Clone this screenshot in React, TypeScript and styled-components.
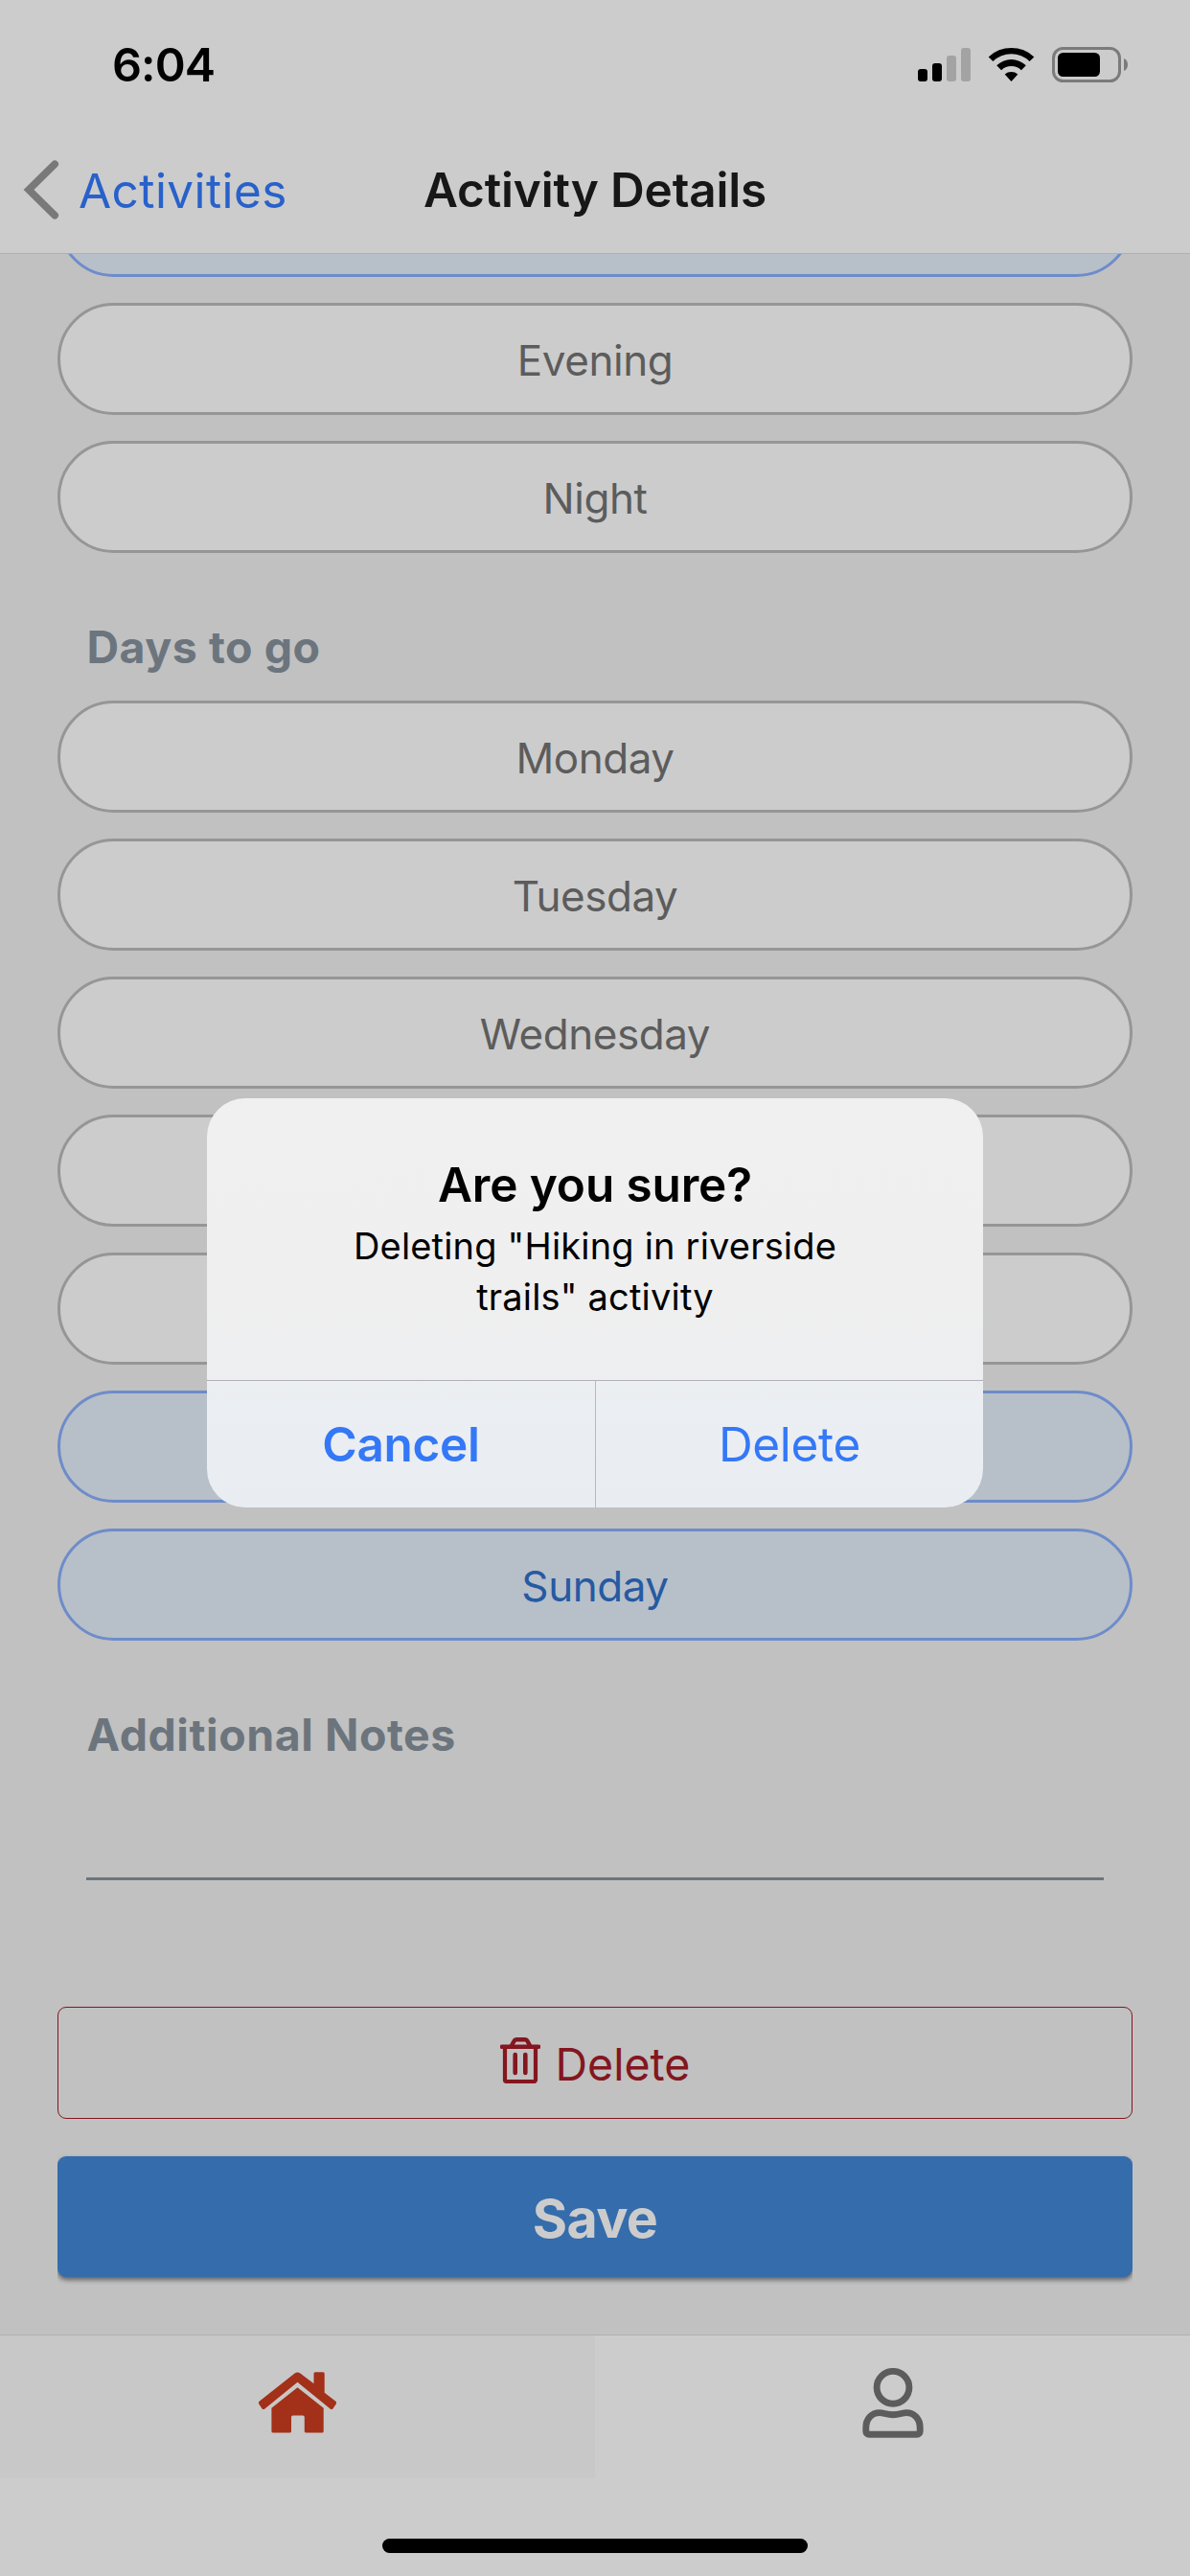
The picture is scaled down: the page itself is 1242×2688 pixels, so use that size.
import React from "react";
import styled, { createGlobalStyle } from "styled-components";

const GlobalStyle = createGlobalStyle`
  * {
    box-sizing: border-box;
  }
  body {
    margin: 0;
    background: #c1c1c1;
  }
  button {
    margin: 0;
    font: inherit;
    color: inherit;
    cursor: pointer;
  }
`;

const Screen = styled.div`
  position: relative;
  display: flex;
  flex-direction: column;
  width: 1242px;
  height: 2688px;
  overflow: hidden;
  background: #c1c1c1;
  font-family: Inter, "Liberation Sans", sans-serif;
`;

const StatusBar = styled.div`
  display: flex;
  flex: none;
  align-items: center;
  justify-content: space-between;
  height: 132px;
  padding: 3px 64px 0 117px;
  background: #cccccc;
`;

const Clock = styled.span`
  font-size: 48.5px;
  font-weight: 600;
  letter-spacing: -0.9px;
  line-height: 60px;
  color: #000;
`;

const StatusIcons = styled.svg`
  display: block;
  width: 222px;
  height: 42px;
`;

const NavBar = styled.header`
  display: grid;
  flex: none;
  grid-template-columns: 1fr auto 1fr;
  align-items: center;
  height: 133px;
  border-bottom: 1px solid #b0b0b0;
  background: #cccccc;
`;

const BackButton = styled.button`
  display: flex;
  align-items: center;
  justify-self: start;
  gap: 19px;
  padding: 0 0 0 24px;
  border: 0;
  background: none;
  color: #2861cb;
  font-size: 49.5px;
  letter-spacing: 0.42px;
  line-height: 62px;
`;

const BackLabel = styled.span`
  padding-top: 2px;
`;

const Chevron = styled.svg`
  display: block;
  width: 39px;
  height: 64px;
`;

const NavTitle = styled.h1`
  margin: 0;
  color: #171717;
  font-size: 49.5px;
  font-weight: 600;
  letter-spacing: -0.18px;
  line-height: 62px;
`;

const Content = styled.main`
  display: flex;
  flex: 1;
  flex-direction: column;
  min-height: 0;
  padding: 0 60px;
  overflow: hidden;
`;

/* The list is scrolled, so its first option is partly under the bar. */
const OptionList = styled.div<{ $scrolled?: number }>`
  display: flex;
  flex: none;
  flex-direction: column;
  gap: 27px;
  margin-top: ${(p) => (p.$scrolled ? -p.$scrolled : 0)}px;
`;

const Option = styled.button<{ $selected?: boolean }>`
  display: flex;
  flex: none;
  align-items: center;
  justify-content: center;
  height: 117px;
  padding: 3px 0 0;
  border: 3px solid ${(p) => (p.$selected ? "#6e8cca" : "#969696")};
  border-radius: 59px;
  background: ${(p) => (p.$selected ? "#b7bfc9" : "#cccccc")};
  color: ${(p) => (p.$selected ? "#265aa2" : "#5c5c5c")};
  font-size: 44px;
  letter-spacing: -0.45px;
  line-height: 56px;
`;

const SectionTitle = styled.h2`
  flex: none;
  margin: 70px 0 28px;
  padding-left: 30.5px;
  color: #6c757d;
  font-size: 46.5px;
  font-weight: 700;
  letter-spacing: 0.53px;
  line-height: 56px;
`;

const NotesField = styled.div`
  flex: none;
  height: 96px;
  margin: 0 30px 132px;
  border-bottom: 3px solid #6c757d;
`;

const Actions = styled.div`
  display: flex;
  flex: none;
  flex-direction: column;
  gap: 39px;
`;

const DeleteButton = styled.button`
  display: flex;
  align-items: center;
  justify-content: center;
  gap: 16px;
  height: 117px;
  padding: 0;
  border: 1px solid #84161f;
  border-radius: 9px;
  background: none;
  color: #84161f;
  font-size: 46.5px;
  line-height: 58px;
`;

const DeleteLabel = styled.span`
  padding-top: 3px;
`;

const TrashIcon = styled.svg`
  display: block;
  width: 42px;
  height: 48px;
  margin-bottom: 5px;
`;

const SaveButton = styled.button`
  display: flex;
  align-items: center;
  justify-content: center;
  height: 126px;
  padding: 4px 0 0;
  border: 0;
  border-radius: 9px;
  background: #356cac;
  box-shadow: 0 3px 5px rgba(0, 0, 0, 0.5);
  clip-path: inset(-4px 0 -12px);
  color: #cccccc;
  font-size: 55.5px;
  font-weight: 700;
  letter-spacing: -0.6px;
  line-height: 68px;
`;

const TabBar = styled.nav`
  display: grid;
  flex: none;
  grid-template-columns: 1fr 1fr;
  height: 150px;
  border-top: 1px solid #b0b0b0;
  background: #cccccc;
`;

const Tab = styled.button<{ $active?: boolean }>`
  display: flex;
  align-items: center;
  justify-content: center;
  padding: 0 0 9px;
  border: 0;
  background: ${(p) => (p.$active ? "#c8c8c8" : "#cccccc")};
  color: ${(p) => (p.$active ? "#a33018" : "#5c5c5c")};
`;

const HomeIcon = styled.svg`
  display: block;
  width: 81px;
  height: 64px;
`;

const PersonIcon = styled.svg`
  display: block;
  width: 64px;
  height: 73px;
`;

const HomeArea = styled.div`
  display: flex;
  flex: none;
  align-items: flex-end;
  justify-content: center;
  height: 102px;
  padding-bottom: 24px;
  background: #cccccc;
`;

const HomeIndicator = styled.div`
  width: 444px;
  height: 15px;
  border-radius: 8px;
  background: #000;
`;

const Alert = styled.div`
  position: absolute;
  top: 1146px;
  left: 216px;
  display: flex;
  flex-direction: column;
  width: 810px;
  height: 427px;
  overflow: hidden;
  border-radius: 40px;
  background: linear-gradient(#f0f0f0 0%, #efefef 50%, #ebeef2 76%, #e9edf2 100%);
`;

const AlertBody = styled.div`
  flex: 1;
  padding: 60px 130px 0;
  color: #000;
  text-align: center;
`;

const AlertTitle = styled.h3`
  margin: 0;
  font-size: 49.5px;
  font-weight: 600;
  letter-spacing: -0.12px;
  line-height: 60px;
`;

const AlertText = styled.p`
  margin: 8px 0 0;
  font-size: 38px;
  letter-spacing: 0.18px;
  line-height: 53px;
`;

const AlertActions = styled.div`
  display: grid;
  flex: none;
  grid-template-columns: 1fr 1fr;
  height: 133px;
  border-top: 1px solid #b0b1b5;
`;

const AlertButton = styled.button<{ $bold?: boolean }>`
  padding: 0;
  border: 0;
  border-left: ${(p) => (p.$bold ? "0" : "1px solid #b8babf")};
  background: none;
  color: #3478f7;
  font-size: 49.5px;
  font-weight: ${(p) => (p.$bold ? 600 : 400)};
  letter-spacing: -0.3px;
  line-height: 62px;
`;

type Choice = { label?: string; selected?: boolean };

/* Options under the nav bar or the alert carry no label. */
const times: Choice[] = [{ selected: true }, { label: "Evening" }, { label: "Night" }];

const days: Choice[] = [
  { label: "Monday" },
  { label: "Tuesday" },
  { label: "Wednesday" },
  {},
  {},
  { selected: true },
  { label: "Sunday", selected: true },
];

function Options({ choices, scrolled }: { choices: Choice[]; scrolled?: number }) {
  return (
    <OptionList $scrolled={scrolled}>
      {choices.map((c, i) => (
        <Option key={i} $selected={c.selected}>
          {c.label}
        </Option>
      ))}
    </OptionList>
  );
}

export default function App() {
  return (
    <>
      <GlobalStyle />
      <Screen>
        <StatusBar>
          <Clock>6:04</Clock>
          <StatusIcons viewBox="956 47 222 42">
            <rect x="958" y="72" width="10" height="13" rx="3" />
            <rect x="973" y="66" width="10" height="19" rx="3" />
            <rect x="988" y="58" width="10" height="27" rx="3" fill="#a3a3a3" />
            <rect x="1003" y="50" width="10" height="35" rx="3" fill="#a3a3a3" />
            <path d="M1031.7 59.4A34.5 34.5 0 0 1 1079.3 59.4L1074.6 64.1A27.2 27.2 0 0 0 1036.4 64.1Z" />
            <path d="M1040.2 68.2A22.2 22.2 0 0 1 1070.8 68.2L1065.9 73.2A15.2 15.2 0 0 0 1045.1 73.2Z" />
            <path d="M1048.7 77.4A10.6 10.6 0 0 1 1062.3 77.4L1055.5 85Z" />
            <rect x="1099.5" y="50.5" width="69" height="34" rx="10" fill="none" stroke="#7b7b7b" strokeWidth="3" />
            <rect x="1104" y="55" width="44" height="25" rx="5.5" />
            <path d="M1173 61C1175.6 62 1177 64.5 1177 67.5S1175.6 73 1173 74Z" fill="#7b7b7b" />
          </StatusIcons>
        </StatusBar>

        <NavBar>
          <BackButton>
            <Chevron viewBox="0 0 39 64" fill="none" stroke="#797979" strokeWidth="7.6" strokeLinecap="round">
              <path d="M33.2 5.2L6 32L33.2 58.8" strokeLinejoin="miter" />
            </Chevron>
            <BackLabel>Activities</BackLabel>
          </BackButton>
          <NavTitle>Activity Details</NavTitle>
          <span />
        </NavBar>

        <Content>
          <Options choices={times} scrolled={93} />
          <SectionTitle>Days to go</SectionTitle>
          <Options choices={days} />
          <SectionTitle>Additional Notes</SectionTitle>
          <NotesField />
          <Actions>
            <DeleteButton>
              <TrashIcon viewBox="0 0 42 48" fill="none" stroke="currentColor">
                <path d="M5 9V44.2A1.8 1.8 0 0 0 6.8 46H35.2A1.8 1.8 0 0 0 37 44.2V9" strokeWidth="4.2" />
                <path d="M1.8 9.8H40.2" strokeWidth="4.4" strokeLinecap="round" />
                <path d="M11.5 9.5L14.4 4A3 3 0 0 1 17 2.3H26A3 3 0 0 1 28.6 4L31.5 9.5" strokeWidth="4.4" />
                <path d="M15.7 18V37M26.3 18V37" strokeWidth="4.6" strokeLinecap="round" />
              </TrashIcon>
              <DeleteLabel>Delete</DeleteLabel>
            </DeleteButton>
            <SaveButton>Save</SaveButton>
          </Actions>
        </Content>

        <TabBar>
          <Tab $active>
            <HomeIcon viewBox="270 2475 81 64" fill="currentColor">
              <path d="M307.6 2476.6Q310.5 2474.2 313.4 2476.6L327.5 2487.3V2476.8Q327.5 2475.3 329 2475.3H337.2Q338.7 2475.3 338.7 2476.8V2496.7L350.4 2505.8Q351.4 2506.8 350.8 2508.4L347.4 2513.4Q346 2514.6 344.6 2513.4L310.5 2485.8L276.4 2513.4Q275 2514.6 273.6 2513.4L270.2 2508.4Q269.6 2506.8 270.6 2505.8Z" />
              <path d="M310.5 2491.2L337.7 2512.8V2536.9Q337.7 2538.6 336 2538.6H319.6Q317.8 2538.6 317.8 2536.9V2522.2Q317.8 2520.4 316 2520.4H305.8Q304 2520.4 304 2522.2V2536.9Q304 2538.6 302.2 2538.6H285.1Q283.4 2538.6 283.4 2536.9V2512.8Z" />
            </HomeIcon>
          </Tab>
          <Tab>
            <PersonIcon viewBox="0 0 64 73" fill="none" stroke="currentColor" strokeWidth="6.9">
              <circle cx="32" cy="20.3" r="16.9" />
              <path d="M3.8 62C3.8 53 10 46.6 18 46.6C22.5 46.6 25 48.7 32 48.7S41.5 46.6 46 46.6C54 46.6 60.2 53 60.2 62V66A3.2 3.2 0 0 1 57 69.2H7A3.2 3.2 0 0 1 3.8 66Z" />
            </PersonIcon>
          </Tab>
        </TabBar>
        <HomeArea>
          <HomeIndicator />
        </HomeArea>

        <Alert role="alertdialog">
          <AlertBody>
            <AlertTitle>Are you sure?</AlertTitle>
            <AlertText>Deleting "Hiking in riverside trails" activity</AlertText>
          </AlertBody>
          <AlertActions>
            <AlertButton $bold>Cancel</AlertButton>
            <AlertButton>Delete</AlertButton>
          </AlertActions>
        </Alert>
      </Screen>
    </>
  );
}
